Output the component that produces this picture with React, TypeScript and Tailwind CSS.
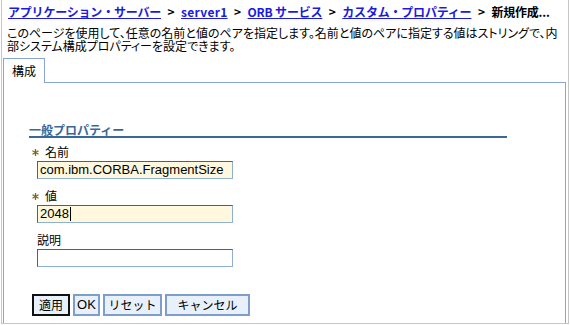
import React from "react";

const JP = "font-['Noto_Sans_CJK_JP','Noto_Sans',sans-serif]";
const PALT = "[font-feature-settings:'palt']";

function Star() {
  return (
    <svg width="7" height="7" viewBox="0 0 7 7" className="shrink-0">
      <g stroke="#7a6a14" strokeWidth="1.3">
        <line x1="3.5" y1="0" x2="3.5" y2="7" />
        <line x1="0.5" y1="1.8" x2="6.5" y2="5.2" />
        <line x1="0.5" y1="5.2" x2="6.5" y2="1.8" />
      </g>
    </svg>
  );
}

function Field({ label, required, value, filled, caret }: { label: string; required?: boolean; value: string; filled?: boolean; caret?: boolean }) {
  return (
    <div className="flex flex-col">
      <div className={`h-[14px] flex items-center leading-[14px] -mt-[2px] mb-[2px] ${required ? "pl-[3px] gap-[6px]" : "pl-[8px]"}`}>
        {required && <Star />}
        <span>{label}</span>
      </div>
      <div
        className={`ml-[8px] w-[196px] h-[18px] border border-t-[#35659a] border-l-[#35659a] border-b-[#8eb0d2] border-r-[#8eb0d2] ${filled ? "bg-[#fff7de]" : "bg-white"} flex items-center pl-[2px] font-['Liberation_Sans',sans-serif] text-[13px] leading-[16px]`}
      >
        <span>{value}</span>
        {caret && <span className="w-[1px] h-[14px] bg-black ml-[1px]" />}
      </div>
    </div>
  );
}

function Sep() {
  return <span className="inline-block w-[20px] text-center font-bold">&gt;</span>;
}

export default function App() {
  const link = "text-[#1a1ae0] underline font-bold";
  return (
    <div className={`w-[570px] h-[325px] bg-white overflow-hidden text-[12px] text-black ${JP}`}>
      <div className="ml-[1px] w-[568px] h-[324px] border-l border-r border-b border-[#c6c6c6] flex flex-col">
        <div className="pl-[6px] pt-[5px] h-[20px] leading-[14px] whitespace-nowrap tracking-[-0.2px]">
          <a className={link}>アプリケーション・サーバー</a>
          <Sep />
          <a className={`${link} tracking-[0.3px]`}>server1</a>
          <Sep />
          <a className={link}>ORB&nbsp;サービス</a>
          <Sep />
          <a className={link}>カスタム・プロパティー</a>
          <Sep />
          <span className="font-bold">新規作成...</span>
        </div>
        <div className={`pl-[5px] pt-[6px] leading-[13px] whitespace-nowrap ${PALT}`}>
          <div>このページを使用して、任意の名前と値のペアを指定します。名前と値のペアに指定する値はストリングで、内</div>
          <div>部システム構成プロパティーを設定できます。</div>
        </div>
        <div className="mt-[6px] ml-[1px] mr-[2px] flex h-[25px]">
          <div className="w-[42px] border-t border-l border-r border-[#87a5d8] pl-[8px] pt-[5px] leading-[13px]">構成</div>
          <div className="flex-1 border-b border-[#87a5d8]" />
        </div>
        <div className="ml-[1px] mr-[2px] flex-1 border-l border-r border-[#87a5d8] pl-[25px] pt-[40px]">
          <div className="w-[478px] border-b-2 border-[#3a6898] text-[#3a6898] font-bold leading-[13px]">一般プロパティー</div>
          <div className="mt-[9px] flex flex-col gap-[12px]">
            <Field label="名前" required value="com.ibm.CORBA.FragmentSize" filled />
            <Field label="値" required value="2048" filled caret />
            <Field label="説明" value="" />
          </div>
          <div className="mt-[27px] ml-[3px] flex gap-[3px] h-[22px]">
            <button className="w-[38px] h-[22px] border-2 border-[#111] bg-[#e8f0fc] leading-[16px]">適用</button>
            <button className="w-[27px] h-[22px] border-2 border-[#7d9dca] bg-[#e8f0fc] leading-[16px] font-['Liberation_Sans',sans-serif] text-[13px]">OK</button>
            <button className="w-[59px] h-[22px] border-2 border-[#7d9dca] bg-[#e8f0fc] leading-[16px]">リセット</button>
            <button className="w-[85px] h-[22px] border-2 border-[#7d9dca] bg-[#e8f0fc] leading-[16px]">キャンセル</button>
          </div>
        </div>
      </div>
    </div>
  );
}
